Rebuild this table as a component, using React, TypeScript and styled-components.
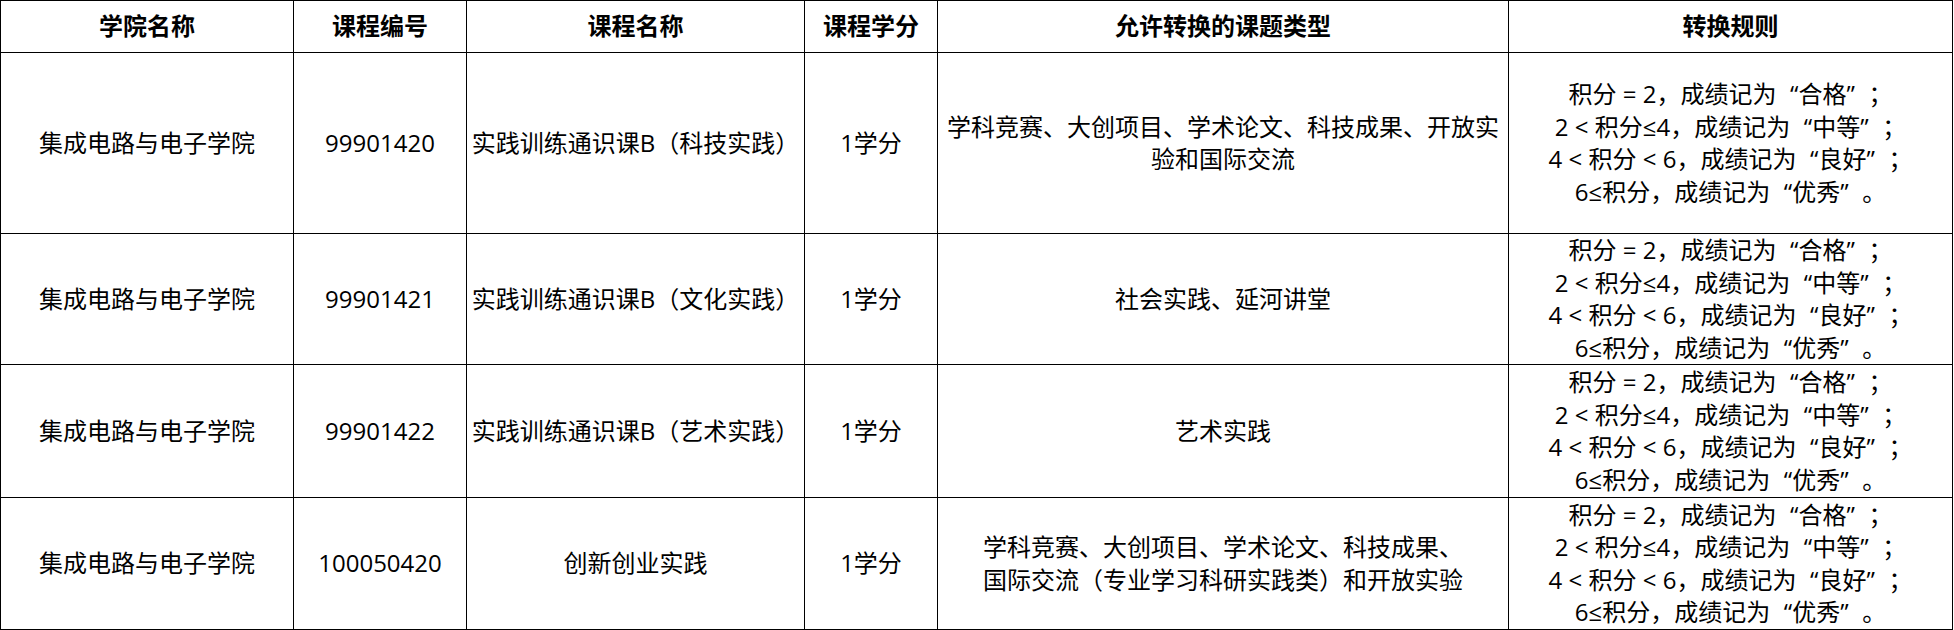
import styled, { createGlobalStyle } from "styled-components";

const GlobalStyle = createGlobalStyle`
    html, body {
        margin: 0;
        padding: 0;
        background: #ffffff;
    }
    body {
        font-family: "Open Sans", "Noto Sans CJK SC", sans-serif;
        color: #000000;
    }
`;

const Table = styled.table`
    width: 1952px;
    border-collapse: collapse;
    table-layout: fixed;
    font-size: 24px;
    line-height: 32.5px;
`;

const Head = styled.th`
    height: 51px;
    padding: 0 4px;
    border: 1px solid #000;
    font-weight: 700;
    text-align: center;
    vertical-align: middle;
`;

const Row = styled.tr<{ h: number }>`
    height: ${(p) => p.h}px;
`;

const Cell = styled.td`
    padding: 0 4px;
    border: 1px solid #000;
    font-weight: 400;
    text-align: center;
    vertical-align: middle;
`;

// 全角引号：字形贴在一侧，另一侧留白
const Q = styled.span<{ side: "open" | "close" }>`
    display: inline-block;
    width: 22px;
    text-align: ${(p) => (p.side === "open" ? "right" : "left")};
`;

const Line = styled.div`
    height: 32.5px;
    line-height: 32.5px;
    white-space: pre;
`;

const columns = [
    { title: "学院名称", width: 293 },
    { title: "课程编号", width: 173 },
    { title: "课程名称", width: 338 },
    { title: "课程学分", width: 133 },
    { title: "允许转换的课题类型", width: 571 },
    { title: "转换规则", width: 444 },
];

const grades = [
    { cond: "积分 = 2", label: "合格", end: "；" },
    { cond: "2 < 积分≤4", label: "中等", end: "；" },
    { cond: "4 < 积分 < 6", label: "良好", end: "；" },
    { cond: "6≤积分", label: "优秀", end: "。" },
];

const Rules = () => (
    <>
        {grades.map((g) => (
            <Line key={g.label}>
                {g.cond}，成绩记为<Q side="open">“</Q>{g.label}<Q side="close">”</Q>{g.end}
            </Line>
        ))}
    </>
);

const rows = [
    {
        code: "99901420",
        name: "实践训练通识课B（科技实践）",
        types: ["学科竞赛、大创项目、学术论文、科技成果、开放实", "验和国际交流"],
        h: 181,
    },
    {
        code: "99901421",
        name: "实践训练通识课B（文化实践）",
        types: ["社会实践、延河讲堂"],
        h: 131,
    },
    {
        code: "99901422",
        name: "实践训练通识课B（艺术实践）",
        types: ["艺术实践"],
        h: 133,
    },
    {
        code: "100050420",
        name: "创新创业实践",
        types: ["学科竞赛、大创项目、学术论文、科技成果、", "国际交流（专业学习科研实践类）和开放实验"],
        h: 132,
    },
];

function App() {
    return (
        <>
            <GlobalStyle />
            <Table>
                <colgroup>
                    {columns.map((c) => (
                        <col key={c.title} style={{ width: c.width }} />
                    ))}
                </colgroup>
                <thead>
                    <tr>
                        {columns.map((c) => (
                            <Head key={c.title}>{c.title}</Head>
                        ))}
                    </tr>
                </thead>
                <tbody>
                    {rows.map((r) => (
                        <Row key={r.code} h={r.h}>
                            <Cell>
                                <Line>集成电路与电子学院</Line>
                            </Cell>
                            <Cell>
                                <Line>{r.code}</Line>
                            </Cell>
                            <Cell>
                                <Line>{r.name}</Line>
                            </Cell>
                            <Cell>
                                <Line>1学分</Line>
                            </Cell>
                            <Cell>
                                {r.types.map((t) => (
                                    <Line key={t}>{t}</Line>
                                ))}
                            </Cell>
                            <Cell>
                                <Rules />
                            </Cell>
                        </Row>
                    ))}
                </tbody>
            </Table>
        </>
    );
}

export default App;
